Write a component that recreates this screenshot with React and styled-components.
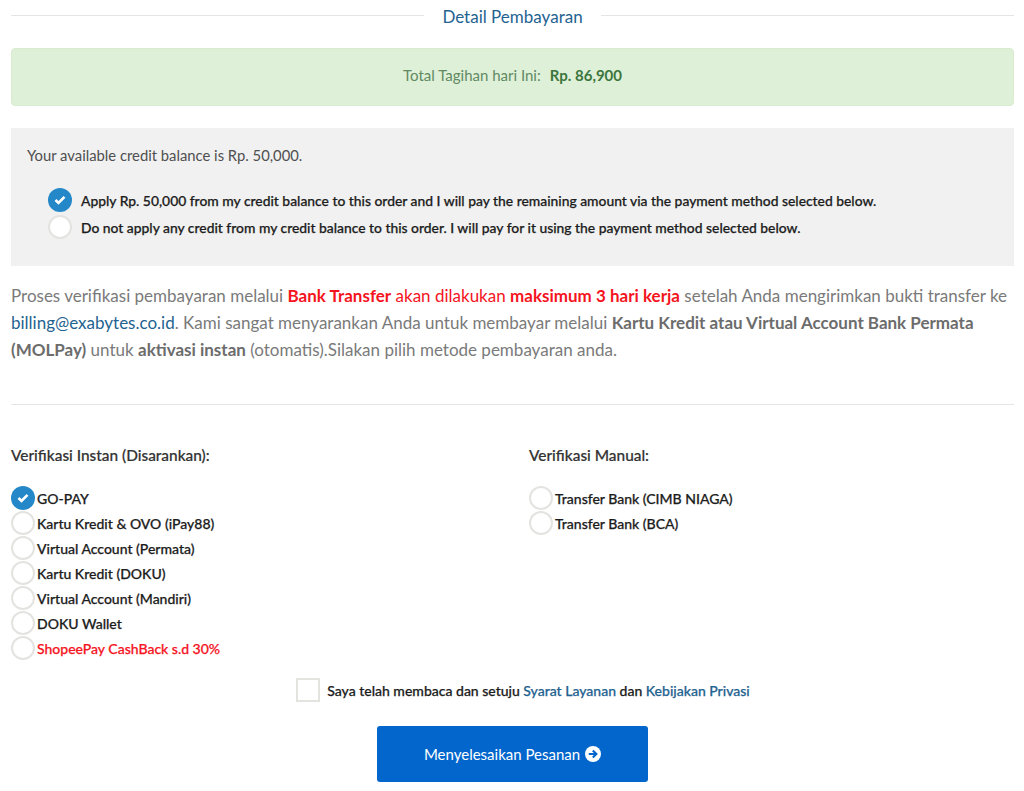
import React from 'react';
import styled, { createGlobalStyle } from 'styled-components';

const Global = createGlobalStyle`
  html, body { margin: 0; padding: 0; background: #fff; }
  body { font-family: Lato, "Open Sans", sans-serif; color: #58595b; }
  * { box-sizing: border-box; }
`;
const Page = styled.div`
  width: 1024px; height: 791px; overflow: hidden; padding: 0 10px 0 11px;
`;
const TitleRow = styled.div`
  display: flex; align-items: flex-start; height: 48px;
  &::before, &::after { content: ''; flex: 1; height: 1px; background: #e5e5e5; margin-top: 15px; }
`;
const Title = styled.h2`
  margin: 0; padding: 0 18px; font-size: 17px; line-height: 33px; font-weight: 400; color: #1f6391;
`;
const Total = styled.div`
  height: 58px; display: flex; align-items: center; justify-content: center; gap: 9px;
  background: #dff0d8; border: 1px solid #d9ecd0; border-radius: 4px; color: #5f8a62; font-size: 15px;
  padding-bottom: 5px;
  b { color: #3c763d; font-weight: 700; }
`;
const Credit = styled.section`
  margin-top: 22px; height: 138px; background: #f1f1f1; padding: 18px 16px 0;
`;
const Balance = styled.p`
  margin: 0 0 24px; font-size: 14.8px; line-height: 18px; color: #4f4f4f;
`;
const CreditOptions = styled.div`
  display: flex; flex-direction: column; gap: 3px; padding-left: 21px;
`;
const Option = styled.label`
  display: flex; align-items: center; gap: ${p => p.$gap}px; height: 24px;
  font-size: ${p => p.$size}px; font-weight: 500; -webkit-text-stroke: .25px currentColor;
  color: ${p => p.$red ? '#f5141e' : '#1c1c1c'};
`;
const Radio = styled.span`
  flex: none; width: 24px; height: 24px; border-radius: 50%; display: flex; align-items: center; justify-content: center;
  background: ${p => p.$on ? '#2488c8' : '#fff'};
  border: ${p => p.$on ? 'none' : '2px solid #e3e3e0'};
`;
const Info = styled.p`
  margin: 16px 0 0; font-size: 17px; line-height: 27px; color: #7a7a7a; height: 82px;
  b { font-weight: 700; color: #6c6c6c; }
  a { color: #1f6391; text-decoration: none; }
  em { font-style: normal; color: #f5141e; }
  em b { color: #f5141e; }
`;
const Rule = styled.hr`
  margin: 40px 0 0; border: 0; border-top: 1px solid #e5e5e5;
`;
const Methods = styled.div`
  display: grid; grid-template-columns: 518px 1fr; margin-top: 40px; height: 224px;
`;
const Heading = styled.h3`
  margin: 0 0 21px; font-size: 15.4px; line-height: 20px; font-weight: 500; -webkit-text-stroke: .2px currentColor; color: #333;
`;
const List = styled.div`
  display: flex; flex-direction: column; gap: 1px;
`;
const Terms = styled.div`
  display: flex; align-items: center; justify-content: center; gap: 7px; margin-top: 9px; padding-left: 21px; height: 24px;
  font-size: 14px; font-weight: 500; -webkit-text-stroke: .25px currentColor; color: #1c1c1c;
  a { color: #1f6391; text-decoration: none; }
`;
const Box = styled.span`
  width: 24px; height: 24px; background: #fff; border: 2px solid #e3e3e0;
`;
const Submit = styled.button`
  display: flex; align-items: center; justify-content: center; gap: 5px; width: 271px; height: 56px; margin: 24px auto 0;
  background: #0266cc; border: 0; border-radius: 3px; color: #fff; font: 400 15px Lato, sans-serif;
`;

const Check = () => (
  <svg width="12" height="10" viewBox="0 0 12 10"><path d="M1.5 5 4.5 8 10.5 1.8" fill="none" stroke="#fff" strokeWidth="2.6" /></svg>
);
const Arrow = () => (
  <svg width="16" height="16" viewBox="0 0 16 16">
    <circle cx="8" cy="8" r="8" fill="#fff" />
    <path d="M3.8 8h7M7.8 4.4 11.4 8l-3.6 3.6" fill="none" stroke="#0266cc" strokeWidth="2.1" />
  </svg>
);
const Choice = ({ on, red, gap = 2, size = 14, children }) => (
  <Option $red={red} $gap={gap} $size={size}><Radio $on={on}>{on && <Check />}</Radio>{children}</Option>
);

const instant = ['Kartu Kredit & OVO (iPay88)', 'Virtual Account (Permata)', 'Kartu Kredit (DOKU)', 'Virtual Account (Mandiri)', 'DOKU Wallet'];

export default function App() {
  return (
    <Page>
      <Global />
      <TitleRow><Title>Detail Pembayaran</Title></TitleRow>
      <Total><span>Total Tagihan hari Ini:</span> <b>Rp. 86,900</b></Total>
      <Credit>
        <Balance>Your available credit balance is Rp. 50,000.</Balance>
        <CreditOptions>
          <Choice on gap={9} size={13.87}>Apply Rp. 50,000 from my credit balance to this order and I will pay the remaining amount via the payment method selected below.</Choice>
          <Choice gap={9} size={13.87}>Do not apply any credit from my credit balance to this order. I will pay for it using the payment method selected below.</Choice>
        </CreditOptions>
      </Credit>
      <Info>
        Proses verifikasi pembayaran melalui <em><b>Bank Transfer</b> akan dilakukan <b>maksimum 3 hari kerja</b></em> setelah Anda mengirimkan bukti transfer ke <a href="#">billing@exabytes.co.id</a>. Kami sangat menyarankan Anda untuk membayar melalui <b>Kartu Kredit atau Virtual Account Bank Permata (MOLPay)</b> untuk <b>aktivasi instan</b> (otomatis).Silakan pilih metode pembayaran anda.
      </Info>
      <Rule />
      <Methods>
        <div>
          <Heading>Verifikasi Instan (Disarankan):</Heading>
          <List>
            <Choice on>GO-PAY</Choice>
            {instant.map(t => <Choice key={t}>{t}</Choice>)}
            <Choice red>ShopeePay CashBack s.d 30%</Choice>
          </List>
        </div>
        <div>
          <Heading>Verifikasi Manual:</Heading>
          <List>
            <Choice>Transfer Bank (CIMB NIAGA)</Choice>
            <Choice>Transfer Bank (BCA)</Choice>
          </List>
        </div>
      </Methods>
      <Terms><Box /><span>Saya telah membaca dan setuju <a href="#">Syarat Layanan</a> dan <a href="#">Kebijakan Privasi</a></span></Terms>
      <Submit>Menyelesaikan Pesanan <Arrow /></Submit>
    </Page>
  );
}
